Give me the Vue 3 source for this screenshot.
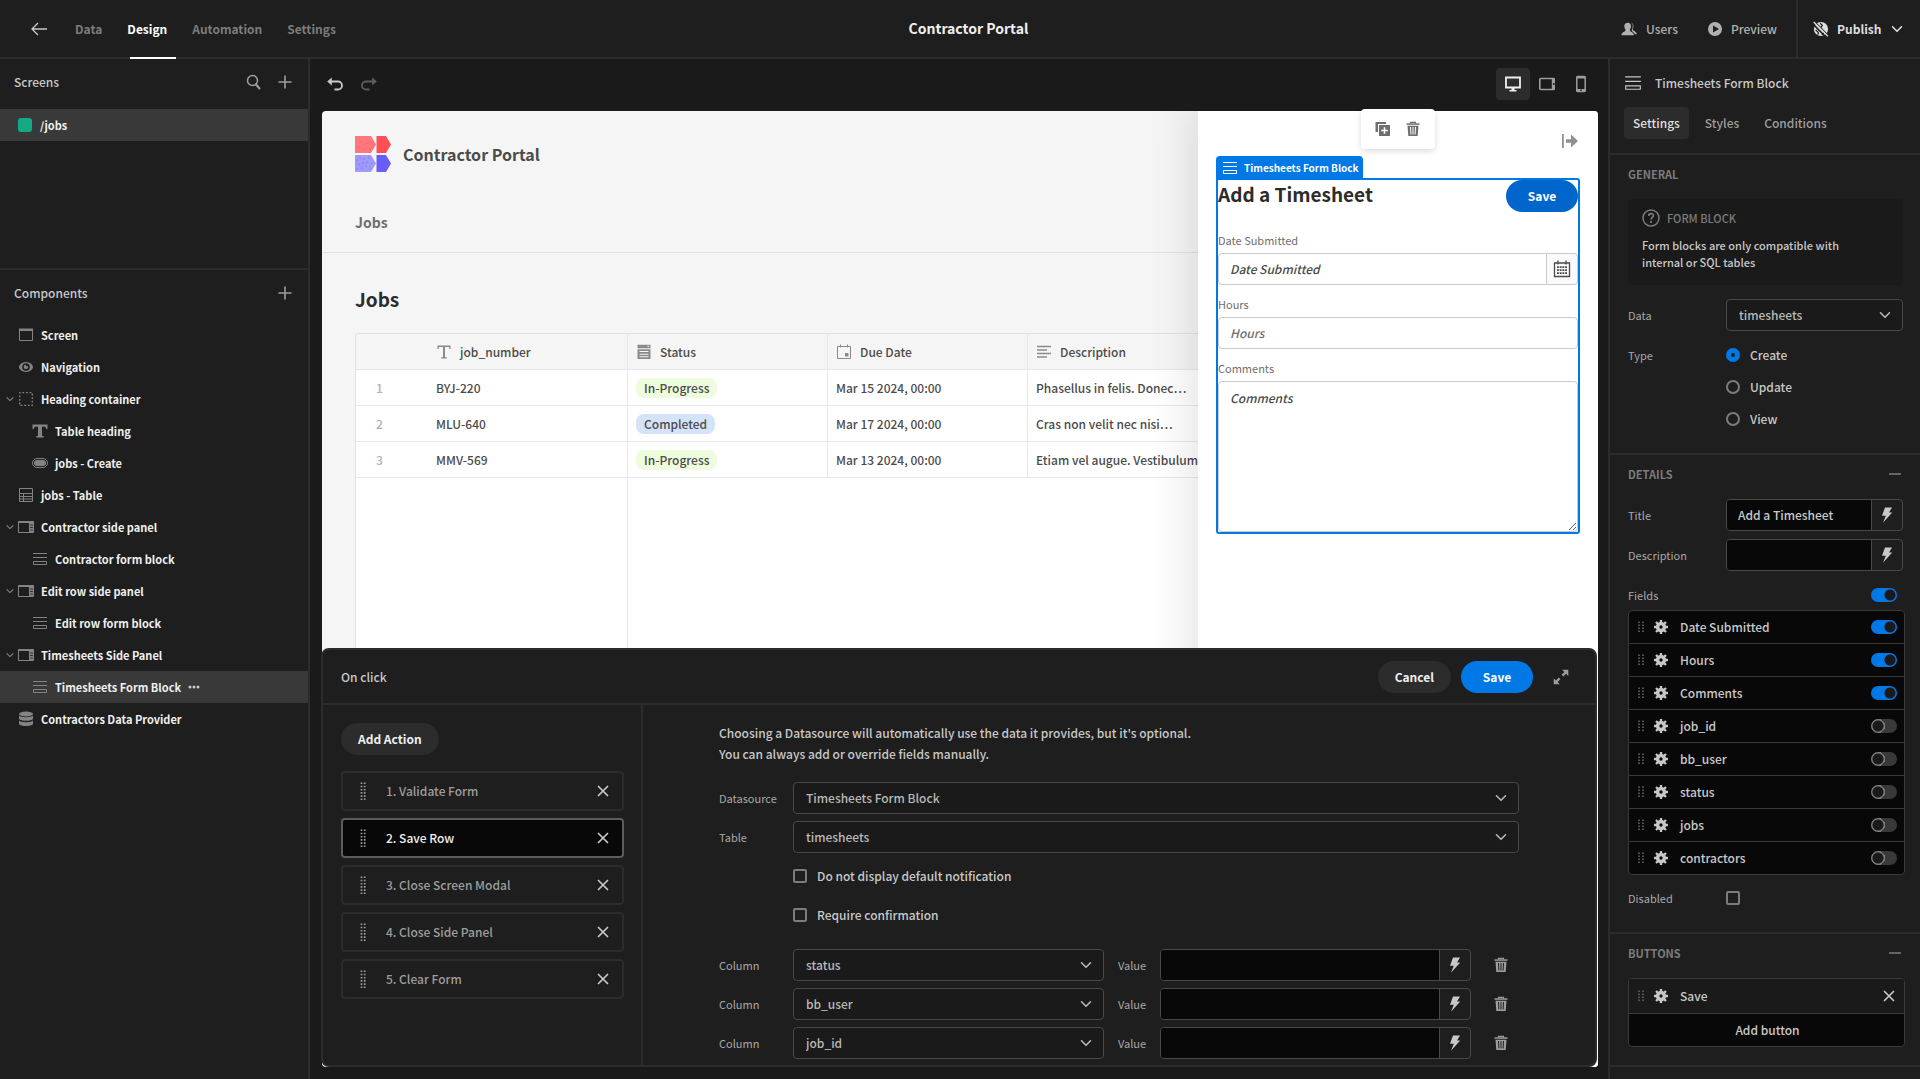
<script setup>
import { ref } from 'vue'

const tabs = ['Data', 'Design', 'Automation', 'Settings']

const tree = [
  { name: 'Screen', icon: 'screen' },
  { name: 'Navigation', icon: 'eye' },
  { name: 'Heading container', icon: 'container', open: true },
  { name: 'Table heading', icon: 'text', child: true },
  { name: 'jobs - Create', icon: 'pill', child: true },
  { name: 'jobs - Table', icon: 'table' },
  { name: 'Contractor side panel', icon: 'sidepanel', open: true },
  { name: 'Contractor form block', icon: 'form', child: true },
  { name: 'Edit row side panel', icon: 'sidepanel', open: true },
  { name: 'Edit row form block', icon: 'form', child: true },
  { name: 'Timesheets Side Panel', icon: 'sidepanel', open: true },
  { name: 'Timesheets Form Block', icon: 'form', child: true, selected: true },
  { name: 'Contractors Data Provider', icon: 'data' },
]

const jobs = [
  { number: 'BYJ-220', status: 'In-Progress', due: 'Mar 15 2024, 00:00', description: 'Phasellus in felis. Donec…' },
  { number: 'MLU-640', status: 'Completed', due: 'Mar 17 2024, 00:00', description: 'Cras non velit nec nisi…' },
  { number: 'MMV-569', status: 'In-Progress', due: 'Mar 13 2024, 00:00', description: 'Etiam vel augue. Vestibulum' },
]

const actions = ['Validate Form', 'Save Row', 'Close Screen Modal', 'Close Side Panel', 'Clear Form']
const activeAction = ref(1)

const columns = ['status', 'bb_user', 'job_id']

const type = ref('Create')
const title = ref('Add a Timesheet')
const allFields = ref(true)
const fields = ref([
  { name: 'Date Submitted', on: true },
  { name: 'Hours', on: true },
  { name: 'Comments', on: true },
  { name: 'job_id', on: false },
  { name: 'bb_user', on: false },
  { name: 'status', on: false },
  { name: 'jobs', on: false },
  { name: 'contractors', on: false },
])
</script>

<template>
  <svg class="sprite" aria-hidden="true">
    <symbol id="back" viewBox="0 0 16 16"><path d="M7 2 1 8l6 6M1 8h15" fill="none" stroke="currentColor" stroke-width="1.3" /></symbol>
    <symbol id="search" viewBox="0 0 16 16"><circle cx="7.5" cy="6.5" r="5" fill="none" stroke="currentColor" stroke-width="1.5" /><path d="m11 10.500 3.500 4" stroke="currentColor" stroke-width="2" stroke-linecap="round" /></symbol>
    <symbol id="plus" viewBox="0 0 14 14"><path d="M7 1v12M1 7h12" fill="none" stroke="currentColor" stroke-width="1.6" stroke-linecap="round" /></symbol>
    <symbol id="minus" viewBox="0 0 14 14"><path d="M1 7h12" stroke="currentColor" stroke-width="1.5" /></symbol>
    <symbol id="cross" viewBox="0 0 12 12"><path d="m1.500 1.500 9 9m0-9-9 9" fill="none" stroke="currentColor" stroke-width="1.7" stroke-linecap="round" /></symbol>
    <symbol id="chevron" viewBox="0 0 12 12"><path d="m1.500 3.800 4.500 4.500 4.500-4.500" fill="none" stroke="currentColor" stroke-width="1.6" stroke-linecap="round" stroke-linejoin="round" /></symbol>
    <symbol id="undo" viewBox="0 0 16 16"><path d="M3 5.500h8a4 4 0 0 1 0 8H7.500" fill="none" stroke="currentColor" stroke-width="1.800" /><path d="M4.800 1.500v8L.2 5.500z" fill="currentColor" /></symbol>
    <symbol id="desktop" viewBox="0 0 18 18"><path d="M2 2.500h14v10H2z" fill="none" stroke="currentColor" stroke-width="1.8" /><path d="M7.500 13h3v2h2v1.500h-7V15h2z" fill="currentColor" /></symbol>
    <symbol id="tablet" viewBox="0 0 18 18"><rect x="1.800" y="3.500" width="14.400" height="11" rx="1" fill="none" stroke="currentColor" stroke-width="1.600" /><path d="M13.800 3h3v12h-3z" fill="currentColor" /><circle cx="15.800" cy="9" r="1" fill="#1a1a1a" /></symbol>
    <symbol id="phone" viewBox="0 0 18 18"><rect x="4.800" y="1.500" width="8.400" height="15" rx="1" fill="none" stroke="currentColor" stroke-width="1.500" /><path d="M4.500 1h9v2.500h-9zM4.500 14h9v3h-9z" fill="currentColor" /><circle cx="9" cy="15.300" r=".8" fill="#1a1a1a" /></symbol>
    <symbol id="users" viewBox="0 0 18 16"><path d="M10 .8c2.500 0 4.300 1.700 4 4.300-.2 1.800-.8 2.600-.8 3.600 0 1.500 4 1.600 4.500 5.300h-2.200c-.7-2.500-3.500-3-3.500-4.700 0-1.200 1.300-2.200 1.300-5C13.300 2.600 12 1 10 .8z" fill="currentColor" /><path d="M7.500 1c2.300 0 3.800 1.500 3.800 4 0 2.200-1.300 3-1.300 4.300 0 2 4.200 1.400 4.500 5.700H.5c.3-4.300 4.500-3.700 4.500-5.700C5 8 3.700 7.200 3.700 5c0-2.500 1.500-4 3.800-4z" fill="currentColor" /></symbol>
    <symbol id="play" viewBox="0 0 14 14"><path fill-rule="evenodd" d="M7 0a7 7 0 1 1 0 14A7 7 0 0 1 7 0zM5 3.500v7L11 7z" fill="currentColor" /></symbol>
    <symbol id="globe" viewBox="0 0 18 18"><circle cx="9" cy="9" r="8" fill="currentColor" /><path d="M8 2.500 10.500 5 8.500 8M12.500 13l-2.500 3M3 10l3 3-.5 2.500" fill="none" stroke="#1e1e1e" stroke-width="1.300" /><path d="m0 3.500 14.500 14.500" stroke="#1e1e1e" stroke-width="1.800" /><path d="m1.500 .5 16 16" stroke="#1e1e1e" stroke-width="1.500" /><path d="m.8 1.200 16 16" stroke="currentColor" stroke-width="1.500" /></symbol>
    <symbol id="screen" viewBox="0 0 16 16"><path d="M1.500 2.500h13v11h-13z" fill="none" stroke="currentColor" /><path d="M1 1.500h14V4H1z" fill="currentColor" /></symbol>
    <symbol id="eye" viewBox="0 0 16 16"><path fill-rule="evenodd" d="M8 3c4 0 7 3 7 5s-3 5-7 5-7-3-7-5 3-5 7-5zm0 1.200a3.800 3.800 0 1 0 0 7.600 3.800 3.800 0 0 0 0-7.600z" fill="currentColor" /><path d="M8 5.700v1.600h2a2.200 2.200 0 1 1-2-1.600z" fill="currentColor" /></symbol>
    <symbol id="container" viewBox="0 0 16 16"><path d="M1.700 1.700h12.600v12.600H1.700z" fill="none" stroke="currentColor" stroke-width="1.3" stroke-dasharray="1.800 1.800" stroke-dashoffset=".9" /></symbol>
    <symbol id="text" viewBox="0 0 16 16"><path d="M.5 1.500h15V6h-1.300l-.7-2.300H10v9l1.800.6v1.200H4.200v-1.200l1.800-.6v-9H2.500L1.800 6H.5z" fill="currentColor" /></symbol>
    <symbol id="textthin" viewBox="0 0 16 16"><path d="M1.500 1.500h13V5h-1l-.5-2H9v10l1.800.5v1H5.200v-1L7 13V3H3l-.5 2h-1z" fill="currentColor" /></symbol>
    <symbol id="pill" viewBox="0 0 16 16"><rect x=".5" y="3.500" width="15" height="9" rx="4.500" fill="none" stroke="currentColor" /><rect x="2" y="5" width="12" height="6" rx="3" fill="currentColor" /></symbol>
    <symbol id="table" viewBox="0 0 16 16"><path d="M1.500 1.500h13v13h-13zM1.500 6.500h13M1.500 9.500h13M1.500 12h13M5.500 6.500v8" fill="none" stroke="currentColor" /></symbol>
    <symbol id="sidepanel" viewBox="0 0 16 16"><path d="M.5 2.500h15v11H.5z" fill="none" stroke="currentColor" /><path d="M0 2h16v2H0zM11 3h4.500v10H11z" fill="currentColor" /><path d="M12 6h3M12 8.500h3M12 11h3" stroke="#1e1e1e" stroke-width=".8" /></symbol>
    <symbol id="form" viewBox="0 0 16 16"><path d="M1 2.500h14M1 6.500h14M1.500 10.500h13v3h-13z" fill="none" stroke="currentColor" /></symbol>
    <symbol id="data" viewBox="0 0 16 16"><ellipse cx="8" cy="3" rx="7" ry="2.500" fill="currentColor" /><path d="M1 4.500c1.500 2.200 12.500 2.200 14 0V8c-1.500 2.400-12.500 2.400-14 0zM1 9.500c1.500 2.200 12.500 2.200 14 0V13c-1.500 2.700-12.500 2.700-14 0z" fill="currentColor" /></symbol>
    <symbol id="more" viewBox="0 0 12 4"><circle cx="2" cy="2" r="1.500" fill="currentColor" /><circle cx="6" cy="2" r="1.500" fill="currentColor" /><circle cx="10" cy="2" r="1.500" fill="currentColor" /></symbol>
    <symbol id="select" viewBox="0 0 16 16"><path fill-rule="evenodd" d="M1.500 .8h13v3.400h-13zM11 1.800l1.300 1.400 1.200-1.400zM1.500 5.200h13V15h-13zM3.500 7v1h9V7zm0 2.700v1h9v-1zm0 2.600v1h9v-1z" fill="currentColor" /></symbol>
    <symbol id="date" viewBox="0 0 16 16"><path d="M1.500 2.500h13v12h-13zM4.500.5v3M11.500.5v3" fill="none" stroke="currentColor" /><path d="M9 9h3.500v3.500H9z" fill="currentColor" /></symbol>
    <symbol id="lines" viewBox="0 0 16 16"><path d="M1 2.500h14M1 6h10M1 9.500h14M1 13h10" stroke="currentColor" stroke-width="1.4" /></symbol>
    <symbol id="duplicate" viewBox="0 0 16 16"><path d="M.5 1h10.500v2H3v8H.5z" fill="currentColor" /><path fill-rule="evenodd" d="M4 4h11v11H4zM8.700 6.200v2.500H6.200v1.600h2.500v2.500h1.600v-2.500h2.500V8.700h-2.500V6.200z" fill="currentColor" /></symbol>
    <symbol id="trash" viewBox="0 0 16 16"><path d="M5.500 2.500V1.300h5v1.200" fill="none" stroke="currentColor" stroke-width="1.2" /><path d="M1.500 2.300h13v1.500h-13z" fill="currentColor" /><path fill-rule="evenodd" d="M2.500 4.700h11L12.700 15H3.300zM5 6l.4 7.500h1L6 6zM7.500 6v7.500h1V6zM10 6l-.4 7.500h1L11 6z" fill="currentColor" /></symbol>
    <symbol id="exit" viewBox="0 0 18 18"><path d="M1 2h1.800v14H1zM5 7.200h5V2.500L17 9l-7 6.500v-4.700H5z" fill="currentColor" /></symbol>
    <symbol id="calendar" viewBox="0 0 18 18"><path d="M1.500 3h15v13.500h-15zM5 .5v4M13 .5v4" fill="none" stroke="currentColor" stroke-width="1.3" /><path d="M4 7.200h10M4 10.200h10M4 13.200h10" stroke="currentColor" stroke-width="1.8" stroke-dasharray="1.900 .8" /></symbol>
    <symbol id="help" viewBox="0 0 18 18"><circle cx="9" cy="9" r="8" fill="none" stroke="currentColor" stroke-width="1.5" /><path d="M6.700 7c0-3.200 4.900-3 4.700-.3-.1 1.700-2.300 1.800-2.300 3.700" fill="none" stroke="currentColor" stroke-width="1.6" /><circle cx="9" cy="12.900" r="1.100" fill="currentColor" /></symbol>
    <symbol id="bolt" viewBox="0 0 16 16"><path d="M6 .5h7L10 5.500h3.200L4 15.800l2.800-7H3z" fill="currentColor" /></symbol>
    <symbol id="gear" viewBox="0 0 16 16"><circle cx="8" cy="8" r="3.900" fill="none" stroke="currentColor" stroke-width="4" /><path d="M8 0v3M8 13v3M0 8h3M13 8h3M2.300 2.300l2 2M11.700 11.700l2 2M13.700 2.300l-2 2M4.300 11.700l-2 2" stroke="currentColor" stroke-width="2.7" /></symbol>
    <symbol id="grip" viewBox="0 0 6 12"><path d="M1 .5v11M5 .5v11" stroke="currentColor" stroke-width="1.8" stroke-dasharray="1.600 1.400" /></symbol>
    <symbol id="dots" viewBox="0 0 6 18"><path d="M1.500 .5v18M4.700 .5v18" stroke="currentColor" stroke-width="1.7" stroke-dasharray="1.600 1.600" /></symbol>
    <symbol id="expand" viewBox="0 0 16 16"><path d="M9 1.500h5.500V7l-2-2-2.500 2.500L8.500 6 11 3.500zM1.500 9v5.500H7l-2-2L7.500 10 6 8.500 3.500 11z" fill="currentColor" /></symbol>
  </svg>

  <div class="app">
    <header class="topbar">
      <nav class="tabs">
        <button class="icon-btn" aria-label="Back"><svg class="i16"><use href="#back" /></svg></button>
        <a v-for="t in tabs" :key="t" href="#" :class="{ active: t === 'Design' }">{{ t }}</a>
      </nav>
      <h1>Contractor Portal</h1>
      <div class="top-actions">
        <button><svg class="i16"><use href="#users" /></svg>Users</button>
        <button><svg class="i14"><use href="#play" /></svg>Preview</button>
        <button class="publish"><svg class="i16"><use href="#globe" /></svg>Publish<svg class="i12"><use href="#chevron" /></svg></button>
      </div>
    </header>

    <div class="body">
      <aside class="left">
        <section class="screens">
          <div class="panel-head">
            <h2>Screens</h2>
            <button class="icon-btn" aria-label="Search screens"><svg class="i16"><use href="#search" /></svg></button>
            <button class="icon-btn" aria-label="Add screen"><svg class="i14"><use href="#plus" /></svg></button>
          </div>
          <a href="#" class="screen-row"><span class="swatch"></span>/jobs</a>
        </section>
        <section>
          <div class="panel-head">
            <h2>Components</h2>
            <button class="icon-btn" aria-label="Add component"><svg class="i14"><use href="#plus" /></svg></button>
          </div>
          <ul class="tree">
            <li v-for="n in tree" :key="n.name" :class="{ child: n.child, selected: n.selected }">
              <svg class="twist"><use v-if="n.open" href="#chevron" /></svg>
              <svg class="i16"><use :href="'#' + n.icon" /></svg>
              <span>{{ n.name }}</span>
              <svg v-if="n.selected" class="more"><use href="#more" /></svg>
            </li>
          </ul>
        </section>
      </aside>

      <main class="canvas">
        <div class="canvas-bar">
          <button class="icon-btn bright" aria-label="Undo"><svg class="i16"><use href="#undo" /></svg></button>
          <button class="icon-btn redo" aria-label="Redo" disabled><svg class="i16"><use href="#undo" /></svg></button>
          <div class="devices">
            <button class="on" aria-label="Desktop"><svg class="i18"><use href="#desktop" /></svg></button>
            <button aria-label="Tablet"><svg class="i18"><use href="#tablet" /></svg></button>
            <button aria-label="Mobile"><svg class="i18"><use href="#phone" /></svg></button>
          </div>
        </div>

        <div class="stage">
          <div class="page">
            <div class="page-nav">
              <div class="brand">
                <svg class="logo" viewBox="0 0 36 36">
                  <path d="M0 0h16l5 8.500L16 17H0z" fill="#ff767c" />
                  <path d="M21.500 0H31l5 8.500-5 8.500h-9.500z" fill="#ff4e56" />
                  <path d="M0 19h16l5 8.500-5 8.500H0z" fill="#9e99fb" />
                  <path d="M21.500 19H31l5 8.500-5 8.500h-9.500z" fill="#6a5cf8" />
                  <g fill="#ff4e56"><circle cx="6" cy="6" r=".6" /><circle cx="10" cy="8" r=".6" /><circle cx="13" cy="7" r=".6" /><circle cx="4" cy="11" r=".6" /><circle cx="9" cy="14" r=".6" /><circle cx="15" cy="13" r=".6" /></g>
                  <g fill="#6a5cf8"><circle cx="2" cy="24" r=".6" /><circle cx="5" cy="22" r=".6" /><circle cx="9" cy="23" r=".6" /><circle cx="14" cy="22" r=".6" /><circle cx="4" cy="28" r=".6" /><circle cx="8" cy="27" r=".6" /><circle cx="12" cy="26" r=".6" /><circle cx="17" cy="27" r=".6" /><circle cx="2" cy="33" r=".6" /><circle cx="7" cy="32" r=".6" /><circle cx="11" cy="30" r=".6" /><circle cx="15" cy="32" r=".6" /></g>
                </svg>
                Contractor Portal
              </div>
              <a href="#">Jobs</a>
            </div>
            <h2>Jobs</h2>
            <div class="grid">
              <table>
                <thead>
                  <tr>
                    <th class="num"></th>
                    <th class="first"><span><svg class="i16"><use href="#textthin" /></svg>job_number</span></th>
                    <th><span><svg class="i16"><use href="#select" /></svg>Status</span></th>
                    <th><span><svg class="i16"><use href="#date" /></svg>Due Date</span></th>
                    <th class="wide"><span><svg class="i16"><use href="#lines" /></svg>Description</span></th>
                  </tr>
                </thead>
                <tbody>
                  <tr v-for="(j, n) in jobs" :key="j.number">
                    <td class="num">{{ n + 1 }}</td>
                    <td class="first">{{ j.number }}</td>
                    <td><span class="badge" :class="{ done: j.status === 'Completed' }">{{ j.status }}</span></td>
                    <td>{{ j.due }}</td>
                    <td>{{ j.description }}</td>
                  </tr>
                </tbody>
              </table>
              <div class="sticky-col"></div>
            </div>

            <aside class="side">
              <button class="exit" aria-label="Close panel"><svg class="i18"><use href="#exit" /></svg></button>
              <form class="sheet" @submit.prevent>
                <div class="tag"><svg class="i16"><use href="#form" /></svg>Timesheets Form Block</div>
                <div class="sheet-head">
                  <h3>Add a Timesheet</h3>
                  <button class="save">Save</button>
                </div>
                <label for="f-date">Date Submitted</label>
                <div class="date">
                  <input id="f-date" class="dark-ph" placeholder="Date Submitted">
                  <button type="button" aria-label="Pick a date"><svg class="i18"><use href="#calendar" /></svg></button>
                </div>
                <label for="f-hours">Hours</label>
                <input id="f-hours" placeholder="Hours">
                <label for="f-comments">Comments</label>
                <textarea id="f-comments" class="dark-ph" placeholder="Comments"></textarea>
              </form>
            </aside>
          </div>

          <div class="float-bar">
            <button aria-label="Duplicate"><svg class="i16"><use href="#duplicate" /></svg></button>
            <button aria-label="Delete"><svg class="i16"><use href="#trash" /></svg></button>
          </div>

          <section class="drawer">
            <header>
              <h2>On click</h2>
              <button class="pill">Cancel</button>
              <button class="pill cta">Save</button>
              <button class="icon-btn" aria-label="Expand"><svg class="i18"><use href="#expand" /></svg></button>
            </header>
            <div class="drawer-body">
              <div class="actions">
                <button class="pill">Add Action</button>
                <ol>
                  <li v-for="(a, n) in actions" :key="a" :class="{ current: n === activeAction }" @click="activeAction = n">
                    <svg class="dots"><use href="#dots" /></svg>
                    <span>{{ n + 1 }}. {{ a }}</span>
                    <button class="icon-btn bright" :aria-label="'Remove ' + a"><svg class="i12"><use href="#cross" /></svg></button>
                  </li>
                </ol>
              </div>
              <div class="config">
                <p>Choosing a Datasource will automatically use the data it provides, but it's optional.<br>You can always add or override fields manually.</p>
                <div class="row">
                  <label for="c-source">Datasource</label>
                  <div class="picker"><select id="c-source"><option>Timesheets Form Block</option></select><svg class="i12"><use href="#chevron" /></svg></div>
                </div>
                <div class="row">
                  <label for="c-table">Table</label>
                  <div class="picker"><select id="c-table"><option>timesheets</option></select><svg class="i12"><use href="#chevron" /></svg></div>
                </div>
                <label class="check"><input type="checkbox">Do not display default notification</label>
                <label class="check"><input type="checkbox">Require confirmation</label>
                <div v-for="c in columns" :key="c" class="row column">
                  <label :for="'col-' + c">Column</label>
                  <div class="picker"><select :id="'col-' + c"><option>{{ c }}</option></select><svg class="i12"><use href="#chevron" /></svg></div>
                  <label :for="'val-' + c">Value</label>
                  <div class="bound"><input :id="'val-' + c"><button :aria-label="'Bind ' + c"><svg class="i16"><use href="#bolt" /></svg></button></div>
                  <button class="icon-btn" :aria-label="'Delete ' + c"><svg class="i16"><use href="#trash" /></svg></button>
                </div>
              </div>
            </div>
          </section>
        </div>
      </main>

      <aside class="right">
        <div class="right-head">
          <h2><svg class="i18"><use href="#form" /></svg>Timesheets Form Block</h2>
          <div class="subtabs">
            <button class="on">Settings</button>
            <button>Styles</button>
            <button>Conditions</button>
          </div>
        </div>

        <section class="group">
          <h3>GENERAL</h3>
          <div class="info">
            <h4><svg class="i18"><use href="#help" /></svg>FORM BLOCK</h4>
            <p>Form blocks are only compatible with<br>internal or SQL tables</p>
          </div>
          <div class="setting">
            <label for="s-data">Data</label>
            <div class="picker"><select id="s-data"><option>timesheets</option></select><svg class="i12"><use href="#chevron" /></svg></div>
          </div>
          <div class="setting types">
            <span class="lbl">Type</span>
            <div>
              <label v-for="t in ['Create', 'Update', 'View']" :key="t"><input v-model="type" type="radio" name="type" :value="t">{{ t }}</label>
            </div>
          </div>
        </section>

        <section class="group">
          <h3>DETAILS<svg class="i14"><use href="#minus" /></svg></h3>
          <div class="setting">
            <label for="s-title">Title</label>
            <div class="bound"><input id="s-title" v-model="title"><button aria-label="Bind title"><svg class="i16"><use href="#bolt" /></svg></button></div>
          </div>
          <div class="setting">
            <label for="s-desc">Description</label>
            <div class="bound"><input id="s-desc"><button aria-label="Bind description"><svg class="i16"><use href="#bolt" /></svg></button></div>
          </div>
          <div class="fields-head">
            <label for="s-fields">Fields</label>
            <input id="s-fields" v-model="allFields" class="switch" type="checkbox">
          </div>
          <ul class="list">
            <li v-for="f in fields" :key="f.name">
              <svg class="grip"><use href="#grip" /></svg>
              <svg class="i14"><use href="#gear" /></svg>
              <label :for="'fld-' + f.name">{{ f.name }}</label>
              <input :id="'fld-' + f.name" v-model="f.on" class="switch" type="checkbox">
            </li>
          </ul>
          <div class="setting disabled">
            <label for="s-disabled">Disabled</label>
            <input id="s-disabled" type="checkbox">
          </div>
        </section>

        <section class="group">
          <h3>BUTTONS<svg class="i14"><use href="#minus" /></svg></h3>
          <ul class="list buttons">
            <li>
              <svg class="grip"><use href="#grip" /></svg>
              <svg class="i14"><use href="#gear" /></svg>
              <span>Save</span>
              <button class="icon-btn bright" aria-label="Remove Save"><svg class="i12"><use href="#cross" /></svg></button>
            </li>
            <li><button class="add">Add button</button></li>
          </ul>
        </section>
      </aside>
    </div>
  </div>
</template>

<style>
body {
  margin: 0;
  background: #1a1a1a;
}
</style>

<style scoped>
* {
  box-sizing: border-box;
}
.sprite {
  display: none;
}
.app {
  --bg: #1e1e1e;
  --line: #2c2c2c;
  --edge: #494949;
  --text: #c8c8c8;
  --muted: #9d9d9d;
  --dim: #7c7c7c;
  --blue: #0078e6;
  display: flex;
  flex-direction: column;
  height: 100vh;
  overflow: hidden;
  background: #1a1a1a;
  color: var(--text);
  font: 500 12px/20px "Noto Sans CJK SC", "Open Sans", sans-serif;
}
h1, h2, h3, h4, p, ul, ol {
  margin: 0;
  padding: 0;
  font: inherit;
  list-style: none;
}
a {
  color: inherit;
  text-decoration: none;
}
button, input, select, textarea {
  margin: 0;
  padding: 0;
  border: 0;
  border-radius: 0;
  outline: 0;
  background: none;
  color: inherit;
  font: inherit;
  appearance: none;
}
svg {
  display: block;
  flex: none;
}
.i12 { width: 12px; height: 12px; }
.i14 { width: 14px; height: 14px; }
.i16 { width: 16px; height: 16px; }
.i18 { width: 18px; height: 18px; }
.icon-btn {
  color: var(--muted);
}
.bright {
  color: var(--text);
}

/* Top bar */
.topbar {
  display: grid;
  grid-template-columns: 1fr auto 1fr;
  align-items: stretch;
  flex: none;
  height: 59px;
  padding-left: 17px;
  border-bottom: 2px solid var(--line);
  background: var(--bg);
}
.topbar h1 {
  color: #efefef;
  font-size: 14px;
  font-weight: 600;
  line-height: 56px;
}
.tabs {
  display: flex;
  align-items: center;
  gap: 25px;
  padding-left: 14px;
  color: var(--dim);
  font-weight: 700;
}
.tabs .icon-btn {
  margin-right: 3px;
  color: var(--text);
}
.tabs a {
  position: relative;
  line-height: 57px;
}
.tabs .active {
  color: #fff;
}
.tabs .active::after {
  content: "";
  position: absolute;
  left: 3px;
  bottom: -2px;
  width: 46px;
  height: 2px;
  background: #fff;
}
.top-actions {
  display: flex;
  justify-content: flex-end;
  gap: 30px;
}
.top-actions button {
  display: flex;
  align-items: center;
  gap: 9px;
  color: #b0b0b0;
}
.top-actions .publish {
  gap: 8px;
  width: 124px;
  margin-left: -11px;
  padding: 0 17px 0 15px;
  border-left: 2px solid var(--line);
  color: #dedede;
  font-weight: 600;
}
.publish .i12 {
  margin-left: auto;
}

.body {
  display: flex;
  flex: 1;
  min-height: 0;
}

/* Left column */
.left {
  flex: none;
  width: 310px;
  border-right: 2px solid var(--line);
  background: var(--bg);
}
.screens {
  height: 211px;
  border-bottom: 2px solid var(--line);
}
.panel-head {
  display: flex;
  align-items: center;
  gap: 17px;
  height: 46px;
  margin-bottom: 4px;
  padding: 0 16px 0 14px;
}
.panel-head h2 {
  flex: 1;
}
.screen-row {
  display: flex;
  align-items: center;
  gap: 8px;
  height: 32px;
  padding-left: 18px;
  background: #393939;
  color: #efefef;
  font-size: 11px;
  font-weight: 700;
}
.swatch {
  width: 14px;
  height: 14px;
  border-radius: 3px;
  background: #12a984;
}
.tree {
  margin-top: -1px;
  color: #efefef;
  font-size: 11px;
  font-weight: 700;
}
.tree li {
  display: flex;
  align-items: center;
  gap: 7px;
  height: 32px;
  padding-left: 6px;
}
.tree .child {
  padding-left: 20px;
}
.tree .selected {
  background: #393939;
}
.tree svg {
  color: #838383;
}
.twist {
  width: 8px;
  height: 8px;
  margin-right: -3px;
}
.tree .more {
  width: 12px;
  height: 4px;
  color: var(--text);
}

/* Canvas */
.canvas {
  display: flex;
  flex: 1;
  flex-direction: column;
  min-width: 0;
  padding: 0 10px 12px 12px;
}
.canvas-bar {
  display: flex;
  align-items: center;
  gap: 18px;
  flex: none;
  height: 52px;
  padding: 0 0 3px 5px;
}
.redo {
  color: #5c5c5c;
  transform: scaleX(-1);
}
.devices {
  display: flex;
  margin-left: auto;
}
.devices button {
  display: grid;
  place-items: center;
  width: 34px;
  height: 32px;
  border-radius: 4px;
  color: var(--muted);
}
.devices .on {
  background: var(--line);
  color: #efefef;
}
.stage {
  position: relative;
  display: flex;
  flex: 1;
  min-height: 0;
}
.page {
  position: relative;
  display: flex;
  flex: 1;
  flex-direction: column;
  overflow: hidden;
  border-radius: 4px;
  background: #f5f5f5;
  color: #4b4b4b;
}
.page-nav {
  display: flex;
  flex-direction: column;
  gap: 40px;
  height: 142px;
  padding: 25px 33px 0;
  border-bottom: 1px solid #e1e1e1;
}
.brand {
  display: flex;
  align-items: center;
  gap: 12px;
  font-size: 16px;
  font-weight: 600;
}
.logo {
  width: 36px;
  height: 36px;
}
.page-nav a {
  color: #6e6e6e;
  font-size: 14px;
  font-weight: 600;
}
.page > h2 {
  margin: 31px 33px 19px;
  color: #2c2c2c;
  font-size: 19px;
  font-weight: 600;
  line-height: 30px;
}
.grid {
  display: flex;
  flex: 1;
  flex-direction: column;
  margin-left: 33px;
  border: 1px solid #e1e1e1;
  border-width: 1px 0 0 1px;
  border-radius: 4px 0 0;
  background: #fff;
  overflow: hidden;
}
table {
  width: 100%;
  border-spacing: 0;
  table-layout: fixed;
}
th, td {
  width: 200px;
  height: 36px;
  padding: 0 8px;
  border: solid #e8e8e8;
  border-width: 0 1px 1px 0;
  font-weight: 500;
  text-align: left;
  white-space: nowrap;
}
th {
  background: #f5f5f5;
}
.num {
  width: 72px;
  padding: 0 0 0 20px;
  border-right: 0;
  color: #b0b0b0;
}
th.wide {
  width: auto;
}
th span {
  display: flex;
  align-items: center;
  gap: 8px;
}
th svg {
  color: #8a8a8a;
}
.badge {
  display: inline-block;
  padding: 0 8px;
  border-radius: 8px;
  background: #edfcdc;
}
.badge.done {
  background: #d5e3fa;
}
.sticky-col {
  flex: 1;
  width: 272px;
  border-right: 1px solid #e8e8e8;
}
.side {
  position: absolute;
  inset: 0 0 0 auto;
  width: 400px;
  padding: 21px 20px;
  background: #fff;
  box-shadow: 0 0 40px 10px rgba(0, 0, 0, .1);
}
.exit {
  display: block;
  margin: 0 -1px 30px auto;
  color: #909090;
}
.sheet {
  position: relative;
  display: flex;
  flex-direction: column;
  outline: 2px solid var(--blue);
  border-radius: 1px;
}
.tag {
  position: absolute;
  left: -2px;
  bottom: 100%;
  display: flex;
  align-items: center;
  gap: 6px;
  height: 24px;
  padding: 0 4px 0 6px;
  border-radius: 4px 4px 0 0;
  background: var(--blue);
  color: #fff;
  font-size: 10px;
  font-weight: 700;
}
.sheet-head {
  display: flex;
  align-items: center;
  justify-content: space-between;
  margin-bottom: 15px;
}
.sheet h3 {
  padding-bottom: 4px;
  color: #2c2c2c;
  font-size: 19px;
  font-weight: 600;
  line-height: 28px;
}
.save {
  width: 72px;
  height: 32px;
  border-radius: 16px;
  background: #0066cc;
  color: #fff;
  font-weight: 700;
}
.sheet label {
  color: #6e6e6e;
  font-size: 11px;
  font-weight: 400;
  line-height: 26px;
}
.sheet input, .sheet textarea {
  height: 32px;
  margin-bottom: 6px;
  padding: 0 11px 2px;
  border: 1px solid #cacaca;
  border-radius: 4px;
  background: #fff;
}
.sheet textarea {
  height: 151px;
  margin: 0;
  padding: 6px 11px;
  resize: vertical;
}
.sheet ::placeholder {
  color: #6e6e6e;
  font-style: italic;
}
.sheet .dark-ph::placeholder {
  color: #4b4b4b;
}
.date {
  display: flex;
}
.date input {
  flex: 1;
  border-radius: 4px 0 0 4px;
}
.date button {
  display: grid;
  place-items: center;
  width: 31px;
  height: 32px;
  border: 1px solid #cacaca;
  border-left: 0;
  border-radius: 0 4px 4px 0;
  background: #fafafa;
}
.float-bar {
  position: absolute;
  top: -2px;
  right: 163px;
  display: flex;
  align-items: center;
  gap: 14px;
  height: 40px;
  padding: 0 14px;
  border-radius: 4px;
  background: #fff;
  box-shadow: 0 2px 6px rgba(0, 0, 0, .15);
  color: #6e6e6e;
}

/* Drawer */
.drawer {
  position: absolute;
  right: 1px;
  bottom: 0;
  left: -1px;
  border: 2px solid var(--line);
  border-radius: 8px;
  background: var(--bg);
}
.drawer header {
  display: flex;
  align-items: center;
  gap: 10px;
  height: 55px;
  padding: 0 25px 0 18px;
  border-bottom: 2px solid var(--line);
}
.drawer h2 {
  flex: 1;
}
.drawer header .icon-btn {
  margin-left: 9px;
}
.pill {
  height: 32px;
  padding: 0 17px;
  border-radius: 16px;
  background: var(--line);
  color: #efefef;
  font-weight: 700;
}
.cta {
  width: 72px;
  background: var(--blue);
  color: #fff;
}
.drawer-body {
  display: flex;
}
.actions {
  flex: none;
  width: 320px;
  padding: 18px 17px 18px 18px;
  border-right: 2px solid var(--line);
}
.actions ol {
  display: grid;
  gap: 7px;
  margin-top: 16px;
}
.actions li {
  display: flex;
  align-items: center;
  gap: 20px;
  height: 40px;
  padding: 0 13px 0 17px;
  border: 2px solid var(--line);
  border-radius: 4px;
  color: var(--muted);
}
.actions li span {
  flex: 1;
}
.actions .current {
  border-color: #5c5c5c;
  background: #080808;
  color: #efefef;
}
.dots {
  width: 6px;
  height: 18px;
  color: var(--muted);
}
.config {
  display: grid;
  flex: 1;
  gap: 7px;
  padding: 17px 76px 6px;
}
.config p {
  margin-bottom: 11px;
  line-height: 21px;
}
.row {
  display: grid;
  grid-template-columns: 74px 1fr;
  align-items: center;
}
.row label, .setting > label, .lbl, .fields-head label {
  color: #a8a8a8;
  font-size: 11px;
  font-weight: 400;
}
.column {
  grid-template-columns: 74px 1fr 56px 1fr 48px;
}
.column > .picker + label {
  padding-left: 14px;
}
.column .icon-btn {
  justify-self: end;
  padding-right: 10px;
}
.check {
  display: flex;
  align-items: center;
  gap: 10px;
  height: 32px;
  padding-left: 74px;
}
.check + .row {
  margin-top: 11px;
}
input[type="checkbox"]:not(.switch) {
  width: 14px;
  height: 14px;
  border: 2px solid var(--dim);
  border-radius: 2px;
}
.picker {
  display: grid;
  align-items: center;
  height: 32px;
  min-width: 0;
  border: 1px solid var(--edge);
  border-radius: 4px;
  background: #1a1a1a;
  color: #b8b8b8;
}
.picker select {
  grid-area: 1 / 1;
  width: 100%;
  height: 30px;
  padding: 0 30px 0 12px;
}
.picker svg {
  grid-area: 1 / 1;
  justify-self: end;
  margin-right: 11px;
  pointer-events: none;
}
.bound {
  display: flex;
  height: 32px;
  min-width: 0;
  border: 1px solid var(--edge);
  border-radius: 4px;
  overflow: hidden;
}
.bound input {
  flex: 1;
  min-width: 0;
  padding: 0 11px;
  background: #080808;
}
.bound button {
  display: grid;
  place-items: center;
  width: 31px;
  border-left: 1px solid var(--edge);
}

/* Right column */
.right {
  flex: none;
  width: 312px;
  overflow: hidden;
  border-left: 2px solid var(--line);
  background: var(--bg);
}
.right-head {
  padding: 0 14px 14px;
  border-bottom: 2px solid var(--line);
}
.right-head h2 {
  display: flex;
  align-items: center;
  gap: 13px;
  height: 48px;
}
.subtabs {
  display: flex;
  gap: 7px;
}
.subtabs button {
  height: 32px;
  padding: 0 9px;
  border-radius: 4px;
  color: var(--muted);
}
.subtabs .on {
  background: var(--line);
  color: #dedede;
}
.group {
  padding: 0 15px 18px 18px;
  border-bottom: 2px solid var(--line);
}
.group h3 {
  display: flex;
  align-items: center;
  justify-content: space-between;
  height: 44px;
  padding: 0 3px 6px 0;
  color: var(--dim);
  font-size: 11px;
  font-weight: 600;
}
.info {
  height: 86px;
  margin: 0 2px 14px 0;
  padding: 10px 14px;
  border-radius: 4px;
  background: #1a1a1a;
  font-size: 11px;
  line-height: 17px;
}
.info h4 {
  display: flex;
  align-items: center;
  gap: 7px;
  height: 18px;
  margin-bottom: 10px;
  color: var(--dim);
}
.setting {
  display: grid;
  grid-template-columns: 98px 1fr;
  align-items: center;
  min-height: 32px;
  margin-bottom: 8px;
  padding-right: 2px;
}
.types {
  align-items: start;
  margin-bottom: 0;
}
.types .lbl {
  line-height: 32px;
}
.types div label {
  display: flex;
  align-items: center;
  gap: 10px;
  height: 32px;
}
input[type="radio"] {
  width: 14px;
  height: 14px;
  border: 2px solid var(--dim);
  border-radius: 50%;
}
input[type="radio"]:checked {
  border: 5px solid var(--blue);
}
.fields-head {
  display: flex;
  align-items: center;
  justify-content: space-between;
  height: 31px;
  padding-right: 8px;
}
.switch {
  flex: none;
  width: 26px;
  height: 14px;
  border-radius: 7px;
  background: radial-gradient(circle at 7px 7px, #1a1a1a 5px, #7c7c7c 6px, #7c7c7c 7px, #393939 7px);
}
.switch:checked {
  background: radial-gradient(circle at 19px 7px, #1a1a1a 5px, var(--blue) 6px);
}
.list {
  border: 1px solid #3a3a3a;
  border-radius: 4px;
  background: #080808;
  overflow: hidden;
}
.list li {
  display: flex;
  align-items: center;
  height: 32px;
  padding: 0 7px 0 9px;
}
.list li + li {
  height: 33px;
  border-top: 1px solid #3a3a3a;
}
.list label, .list span {
  flex: 1;
}
.grip {
  width: 6px;
  height: 12px;
  margin-right: 10px;
  color: #5c5c5c;
}
.list .i14 {
  margin-right: 12px;
}
.disabled {
  margin: 7px 0 0;
}
.list.buttons li:first-child {
  height: 34px;
  padding-right: 9px;
  background: #1a1a1a;
}
.add {
  flex: 1;
  height: 100%;
}
</style>
